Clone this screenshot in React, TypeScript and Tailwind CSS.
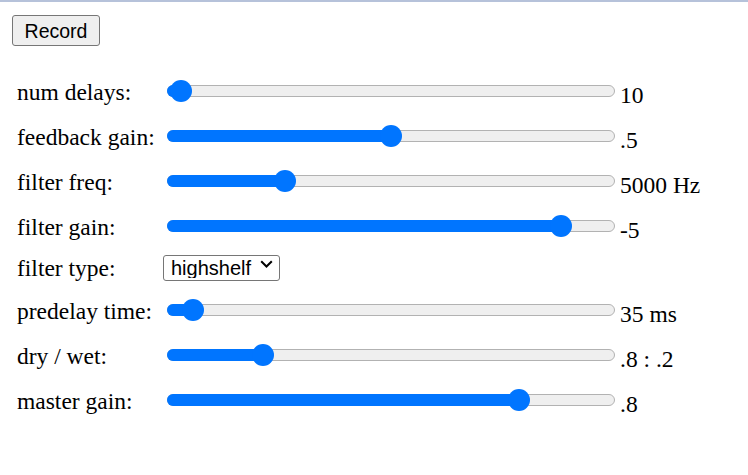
const rows = [
  { label: "num delays:", pct: 0.007, value: "10" },
  { label: "feedback gain:", pct: 0.5, value: ".5" },
  { label: "filter freq:", pct: 0.25, value: "5000 Hz" },
  { label: "filter gain:", pct: 0.9, value: "-5" },
  { label: "filter type:", select: true },
  { label: "predelay time:", pct: 0.035, value: "35 ms" },
  { label: "dry / wet:", pct: 0.2, value: ".8 : .2" },
  { label: "master gain:", pct: 0.8, value: ".8" },
];

const Slider = ({ pct }: { pct: number }) => {
  // thumb center travels from 11px to width-11px
  const left = `calc(11px + (100% - 22px) * ${pct})`;
  return (
    <div className="relative ml-1 h-[22px] w-[448px]">
      <div className="absolute inset-x-0 top-[5px] h-[12px] rounded-full border border-[#b2b2b2] bg-[#efefef]" />
      <div
        className="absolute left-0 top-[5px] h-[12px] rounded-full bg-[#0075ff]"
        style={{ width: left }}
      />
      <div
        className="absolute top-0 h-[22px] w-[22px] -translate-x-1/2 rounded-full bg-[#0075ff]"
        style={{ left }}
      />
    </div>
  );
};

export default function App() {
  return (
    <div className="min-h-screen border-t-2 border-[#b6c2da] bg-white text-black">
      <div className="pl-3 pt-[13px]">
        <button className="h-[31px] w-[88px] rounded-[3px] border border-[#767676] bg-[#efefef] pt-[2px] font-['Liberation_Sans',Arial,sans-serif] text-[19.5px] leading-none">
          Record
        </button>
      </div>

      <div className="mt-[22px] pl-[17px] font-['Liberation_Serif','Times_New_Roman',serif] text-[23.5px]">
        {rows.map((r) =>
          r.select ? (
            <div key={r.label} className="flex h-[39px] items-center">
              <div className="w-[146px] pt-[3px]">{r.label}</div>
              <div className="relative">
                <select className="h-[26px] w-[117px] appearance-none rounded-[3px] border border-[#767676] bg-white pl-[7px] font-['Liberation_Sans',Arial,sans-serif] text-[20px] leading-none outline-none">
                  <option>highshelf</option>
                </select>
                <svg
                  className="pointer-events-none absolute right-[7px] top-[10px]"
                  width="13"
                  height="8"
                  viewBox="0 0 13 8"
                  fill="none"
                >
                  <path d="M1.2 1.2 6.5 6.5l5.3-5.3" stroke="#000" strokeWidth="2" />
                </svg>
              </div>
            </div>
          ) : (
            <div key={r.label} className="flex h-[45px] items-center">
              <div className="w-[146px] pt-[5px]">{r.label}</div>
              <Slider pct={r.pct!} />
              <span className="ml-[5px] pt-[10px] leading-none">{r.value}</span>
            </div>
          )
        )}
      </div>
    </div>
  );
}
